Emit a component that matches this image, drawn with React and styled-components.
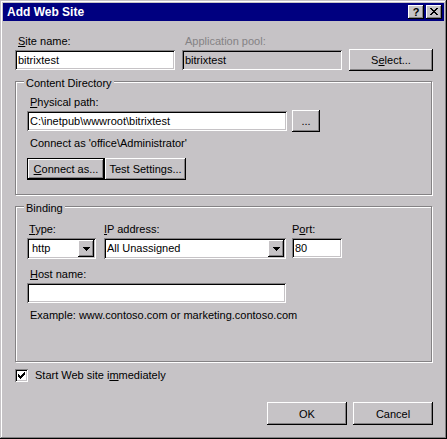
import React from 'react'
import styled, { createGlobalStyle, css } from 'styled-components'

const face = '#c6c3c6'
const shadow = '#848284'
const dark = '#000'
const light = '#fff'

const GlobalStyle = createGlobalStyle`
  html, body {
    margin: 0;
    padding: 0;
    background: ${face};
  }
  body {
    font-family: "Liberation Sans", Arial, sans-serif;
    font-size: 11px;
    color: #000;
  }
  * {
    box-sizing: border-box;
  }
`

const raised = css`
  box-shadow: inset -1px -1px 0 ${dark}, inset 1px 1px 0 ${light},
    inset -2px -2px 0 ${shadow}, inset 2px 2px 0 ${face};
`

const defaultRaised = css`
  box-shadow: inset 0 0 0 1px ${dark}, inset -2px -2px 0 ${dark},
    inset 2px 2px 0 ${light}, inset -3px -3px 0 ${shadow};
`

const sunken = css`
  box-shadow: inset 1px 1px 0 ${shadow}, inset -1px -1px 0 ${light},
    inset 2px 2px 0 ${dark}, inset -2px -2px 0 ${face};
`

const Window = styled.div`
  width: 447px;
  height: 439px;
  padding: 3px;
  background: ${face};
  box-shadow: inset -1px -1px 0 ${dark}, inset 1px 1px 0 ${face},
    inset -2px -2px 0 ${shadow}, inset 2px 2px 0 ${light};
  display: flex;
  flex-direction: column;
`

const TitleBar = styled.div`
  height: 18px;
  background: #000080;
  display: flex;
  align-items: center;
  padding: 0 2px;
`

const Title = styled.div`
  flex: 1;
  color: #fff;
  font-weight: bold;
  font-size: 12px;
  line-height: 18px;
  padding-left: 2px;
`

const CaptionButton = styled.div`
  width: 16px;
  height: 14px;
  margin-left: ${p => p.$gap || 0}px;
  background: ${face};
  ${raised}
  display: flex;
  align-items: center;
  justify-content: center;
  font-weight: bold;
  font-size: 11px;
  line-height: 14px;
  padding-bottom: 1px;
`

const Body = styled.div`
  flex: 1;
  padding: 14px 11px 0 12px;
  display: flex;
  flex-direction: column;
`

const TopGrid = styled.div`
  display: grid;
  grid-template-columns: 160px 160px 1fr;
  grid-template-rows: 13px 22px;
  column-gap: 7px;
  row-gap: 1px;
  align-items: center;
`

const Label = styled.div`
  line-height: 13px;
  height: 13px;
  padding-left: ${p => (p.$indent ?? 3)}px;
  margin-top: ${p => p.$mt || 0}px;
  color: ${p => (p.$disabled ? shadow : '#000')};
  white-space: nowrap;
`

const TextInput = styled.input`
  display: block;
  width: ${p => (p.$w ? `${p.$w}px` : '100%')};
  height: 20px;
  margin-top: ${p => p.$mt || 0}px;
  border: none;
  outline: none;
  padding: 0 2px 0 3px;
  font: inherit;
  color: #000;
  background: ${p => (p.$disabled ? face : '#fff')};
  ${sunken}
`

const Button = styled.button`
  width: ${p => p.$w}px;
  height: ${p => p.$h || 23}px;
  border: none;
  padding: 0;
  font: inherit;
  color: #000;
  background: ${face};
  ${p => (p.$default ? defaultRaised : raised)}
`

const Group = styled.div`
  position: relative;
  width: calc(100% - 1px);
  margin-top: ${p => p.$mt}px;
  padding: ${p => p.$pad};
  border: 1px solid ${shadow};
  box-shadow: inset 1px 1px 0 ${light}, 1px 1px 0 ${light};
`

const Legend = styled.div`
  position: absolute;
  top: -5px;
  left: 8px;
  padding: 0 2px;
  line-height: 13px;
  background: ${face};
`

const Row = styled.div`
  display: flex;
  align-items: ${p => p.$align || 'center'};
  gap: ${p => p.$gap || 0}px;
  margin-top: ${p => p.$mt || 0}px;
`

const Column = styled.div`
  width: ${p => p.$w}px;
  display: flex;
  flex-direction: column;
`

const Combo = styled.div`
  width: 100%;
  height: 21px;
  margin-top: 2px;
  padding: 2px;
  background: #fff;
  ${sunken}
  display: flex;
`

const ComboText = styled.div`
  flex: 1;
  line-height: 17px;
  padding-left: ${p => p.$pad || 1}px;
  white-space: nowrap;
`

const ComboArrow = styled.div`
  width: 16px;
  background: ${face};
  ${raised}
  display: flex;
  align-items: center;
  justify-content: center;
`

const CheckRow = styled.div`
  display: flex;
  align-items: center;
  gap: 7px;
  height: 13px;
  margin-top: 7px;
  line-height: 13px;
`

const CheckBox = styled.div`
  width: 13px;
  height: 13px;
  padding: 3px;
  background: #fff;
  ${sunken}
  display: flex;
`

const Footer = styled.div`
  display: flex;
  justify-content: flex-end;
  gap: 6px;
  margin-top: 20px;
`

const Pixels = ({ w, h, runs }) => (
  <svg width={w} height={h} viewBox={`0 0 ${w} ${h}`} shapeRendering="crispEdges">
    {runs.map(([x, y, l], i) => (
      <rect key={i} x={x} y={y} width={l} height={1} fill="#000" />
    ))}
  </svg>
)

const closeRuns = [
  [0, 0, 2], [6, 0, 2],
  [1, 1, 2], [5, 1, 2],
  [2, 2, 4],
  [3, 3, 2],
  [2, 4, 4],
  [1, 5, 2], [5, 5, 2],
  [0, 6, 2], [6, 6, 2],
]

const checkRuns = [
  [6, 0, 1],
  [5, 1, 2],
  [0, 2, 1], [4, 2, 3],
  [0, 3, 2], [3, 3, 3],
  [0, 4, 5],
  [1, 5, 3],
  [2, 6, 1],
]

const arrowRuns = [
  [0, 0, 7],
  [1, 1, 5],
  [2, 2, 3],
  [3, 3, 1],
]

const DropDown = ({ value, pad }) => (
  <Combo>
    <ComboText $pad={pad}>{value}</ComboText>
    <ComboArrow>
      <Pixels w={7} h={4} runs={arrowRuns} />
    </ComboArrow>
  </Combo>
)

export default function App() {
  return (
    <>
      <GlobalStyle />
      <Window>
        <TitleBar>
          <Title>Add Web Site</Title>
          <CaptionButton>?</CaptionButton>
          <CaptionButton $gap={2}>
            <Pixels w={8} h={7} runs={closeRuns} />
          </CaptionButton>
        </TitleBar>

        <Body>
          <TopGrid>
            <Label><u>S</u>ite name:</Label>
            <Label $disabled>Application pool:</Label>
            <span />
            <TextInput defaultValue="bitrixtest" />
            <TextInput defaultValue="bitrixtest" $disabled readOnly />
            <Button $w={84} $h={22}>S<u>e</u>lect...</Button>
          </TopGrid>

          <Group $mt={10} $pad="14px 11px 14px 11px">
            <Legend>Content Directory</Legend>
            <Label><u>P</u>hysical path:</Label>
            <Row $gap={5} $mt={1}>
              <TextInput $w={260} defaultValue="C:\inetpub\wwwroot\bitrixtest" />
              <Button $w={28} $h={22}>...</Button>
            </Row>
            <Label $mt={5}>Connect as 'office\Administrator'</Label>
            <Row $mt={8}>
              <Button $w={78} $h={22} $default><u>C</u>onnect as...</Button>
              <Button $w={81} $h={22}>Test Settings...</Button>
            </Row>
          </Group>

          <Group $mt={11} $pad="16px 11px 39px 11px">
            <Legend>Binding</Legend>
            <Row $align="flex-start">
              <Column $w={69}>
                <Label $indent={2}><u>T</u>ype:</Label>
                <DropDown value="http" pad={3} />
              </Column>
              <Column $w={182} style={{ marginLeft: 8 }}>
                <Label $indent={0}><u>I</u>P address:</Label>
                <DropDown value="All Unassigned" pad={1} />
              </Column>
              <Column $w={50} style={{ marginLeft: 6 }}>
                <Label $indent={0}>P<u>o</u>rt:</Label>
                <TextInput $mt={2} defaultValue="80" />
              </Column>
            </Row>
            <Label $mt={9}><u>H</u>ost name:</Label>
            <TextInput $w={259} $mt={2} defaultValue="" />
            <Label $mt={6}>Example: www.contoso.com or marketing.contoso.com</Label>
          </Group>

          <CheckRow>
            <CheckBox>
              <Pixels w={7} h={7} runs={checkRuns} />
            </CheckBox>
            <span>Start Web site i<u>m</u>mediately</span>
          </CheckRow>

          <Footer>
            <Button $w={80}>OK</Button>
            <Button $w={80}>Cancel</Button>
          </Footer>
        </Body>
      </Window>
    </>
  )
}
